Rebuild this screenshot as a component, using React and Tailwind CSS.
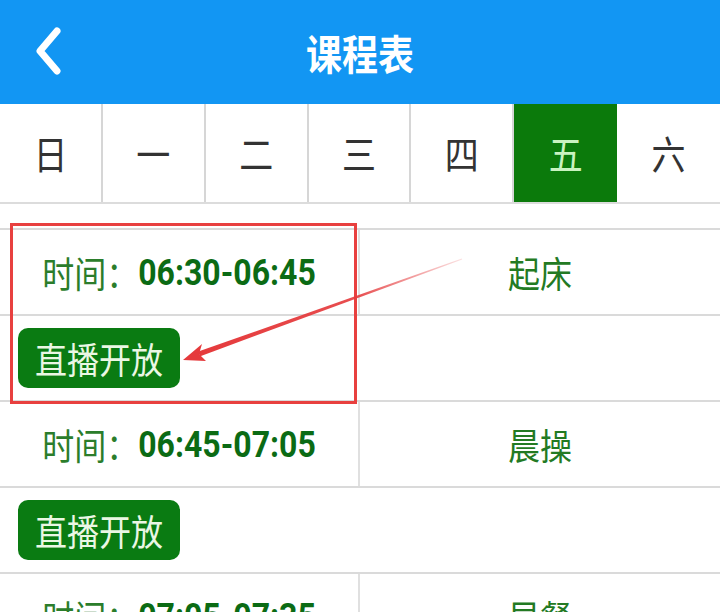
import React from "react";

const cjk = "font-['Noto_Sans_CJK_SC',sans-serif]";

function Chevron() {
  return (
    <svg width="30" height="50" viewBox="0 0 30 50" className="block">
      <polyline points="24,4 7,24 24,44" fill="none" stroke="#ffffff" strokeWidth="7" strokeLinecap="round" strokeLinejoin="round" />
    </svg>
  );
}

const days = ["日", "一", "二", "三", "四", "五", "六"];

function TimeRow({ time, name }) {
  return (
    <div className="grid grid-cols-2 h-[86px] border-t-2 border-[#dadada]">
      <div className="flex items-center justify-center border-r-2 border-[#e0e0e0]">
        <span className={`inline-block scale-y-115 text-[32px] leading-none text-[#2b7d2b] ${cjk}`}>时间：</span>
        <span className="inline-block scale-y-115 text-[32px] leading-none font-bold text-[#0b6b14] font-['Roboto',sans-serif]">{time}</span>
      </div>
      <div className="flex items-center justify-center">
        <span className={`inline-block scale-y-115 text-[32px] leading-none text-[#237a23] ${cjk}`}>{name}</span>
      </div>
    </div>
  );
}

function LiveRow() {
  return (
    <div className="flex items-center h-[86px] border-t-2 border-[#dadada] pl-[18px]">
      <div className="flex items-center justify-center w-[162px] h-[60px] rounded-[10px] bg-[#0a7b12]">
        <span className={`inline-block scale-y-115 text-[32px] leading-none text-[#eaf7e4] ${cjk}`}>直播开放</span>
      </div>
    </div>
  );
}

export default function App() {
  return (
    <div className="relative w-[720px] h-[612px] overflow-hidden bg-white">
      <div className="grid grid-cols-[1fr_auto_1fr] items-center h-[104px] bg-[#1296f3]">
        <div className="pl-[33px]">
          <Chevron />
        </div>
        <span className={`inline-block scale-y-115 text-[36px] leading-none font-bold text-white ${cjk}`}>课程表</span>
        <div />
      </div>
      <div className="grid grid-cols-7 h-[100px] border-b-2 border-[#dcdcdc]">
        {days.map((d, i) => (
          <div
            key={d}
            className={
              i === 5
                ? "flex items-center justify-center bg-[#0b7a0b]"
                : i === 6
                ? "flex items-center justify-center bg-white"
                : "flex items-center justify-center bg-white border-r-2 border-[#d6d6d6]"
            }
          >
            <span className={`inline-block scale-y-115 text-[34px] leading-none ${i === 5 ? "text-[#c9f3c0]" : "text-[#333333]"} ${cjk}`}>{d}</span>
          </div>
        ))}
      </div>
      <div className="h-[24px]" />
      <TimeRow time="06:30-06:45" name="起床" />
      <LiveRow />
      <TimeRow time="06:45-07:05" name="晨操" />
      <LiveRow />
      <TimeRow time="07:05-07:35" name="早餐" />

      <div className="absolute left-[10px] top-[223px] w-[347px] h-[181px] border-[3px] border-[#e8403f]" />
      <svg className="absolute left-0 top-0 pointer-events-none" width="720" height="612" viewBox="0 0 720 612">
        <defs>
          <linearGradient id="ag" x1="199" y1="354" x2="462" y2="259" gradientUnits="userSpaceOnUse">
            <stop offset="0" stopColor="#e53a3c" stopOpacity="1" />
            <stop offset="0.6" stopColor="#e53a3c" stopOpacity="0.9" />
            <stop offset="1" stopColor="#e53a3c" stopOpacity="0.15" />
          </linearGradient>
        </defs>
        <polygon points="462.2,259.5 461.8,258.5 198.3,351.6 199.7,356.4" fill="url(#ag)" />
        <polygon points="183,360 202,344 199,354 206,361" fill="#e53a3c" />
      </svg>
    </div>
  );
}
